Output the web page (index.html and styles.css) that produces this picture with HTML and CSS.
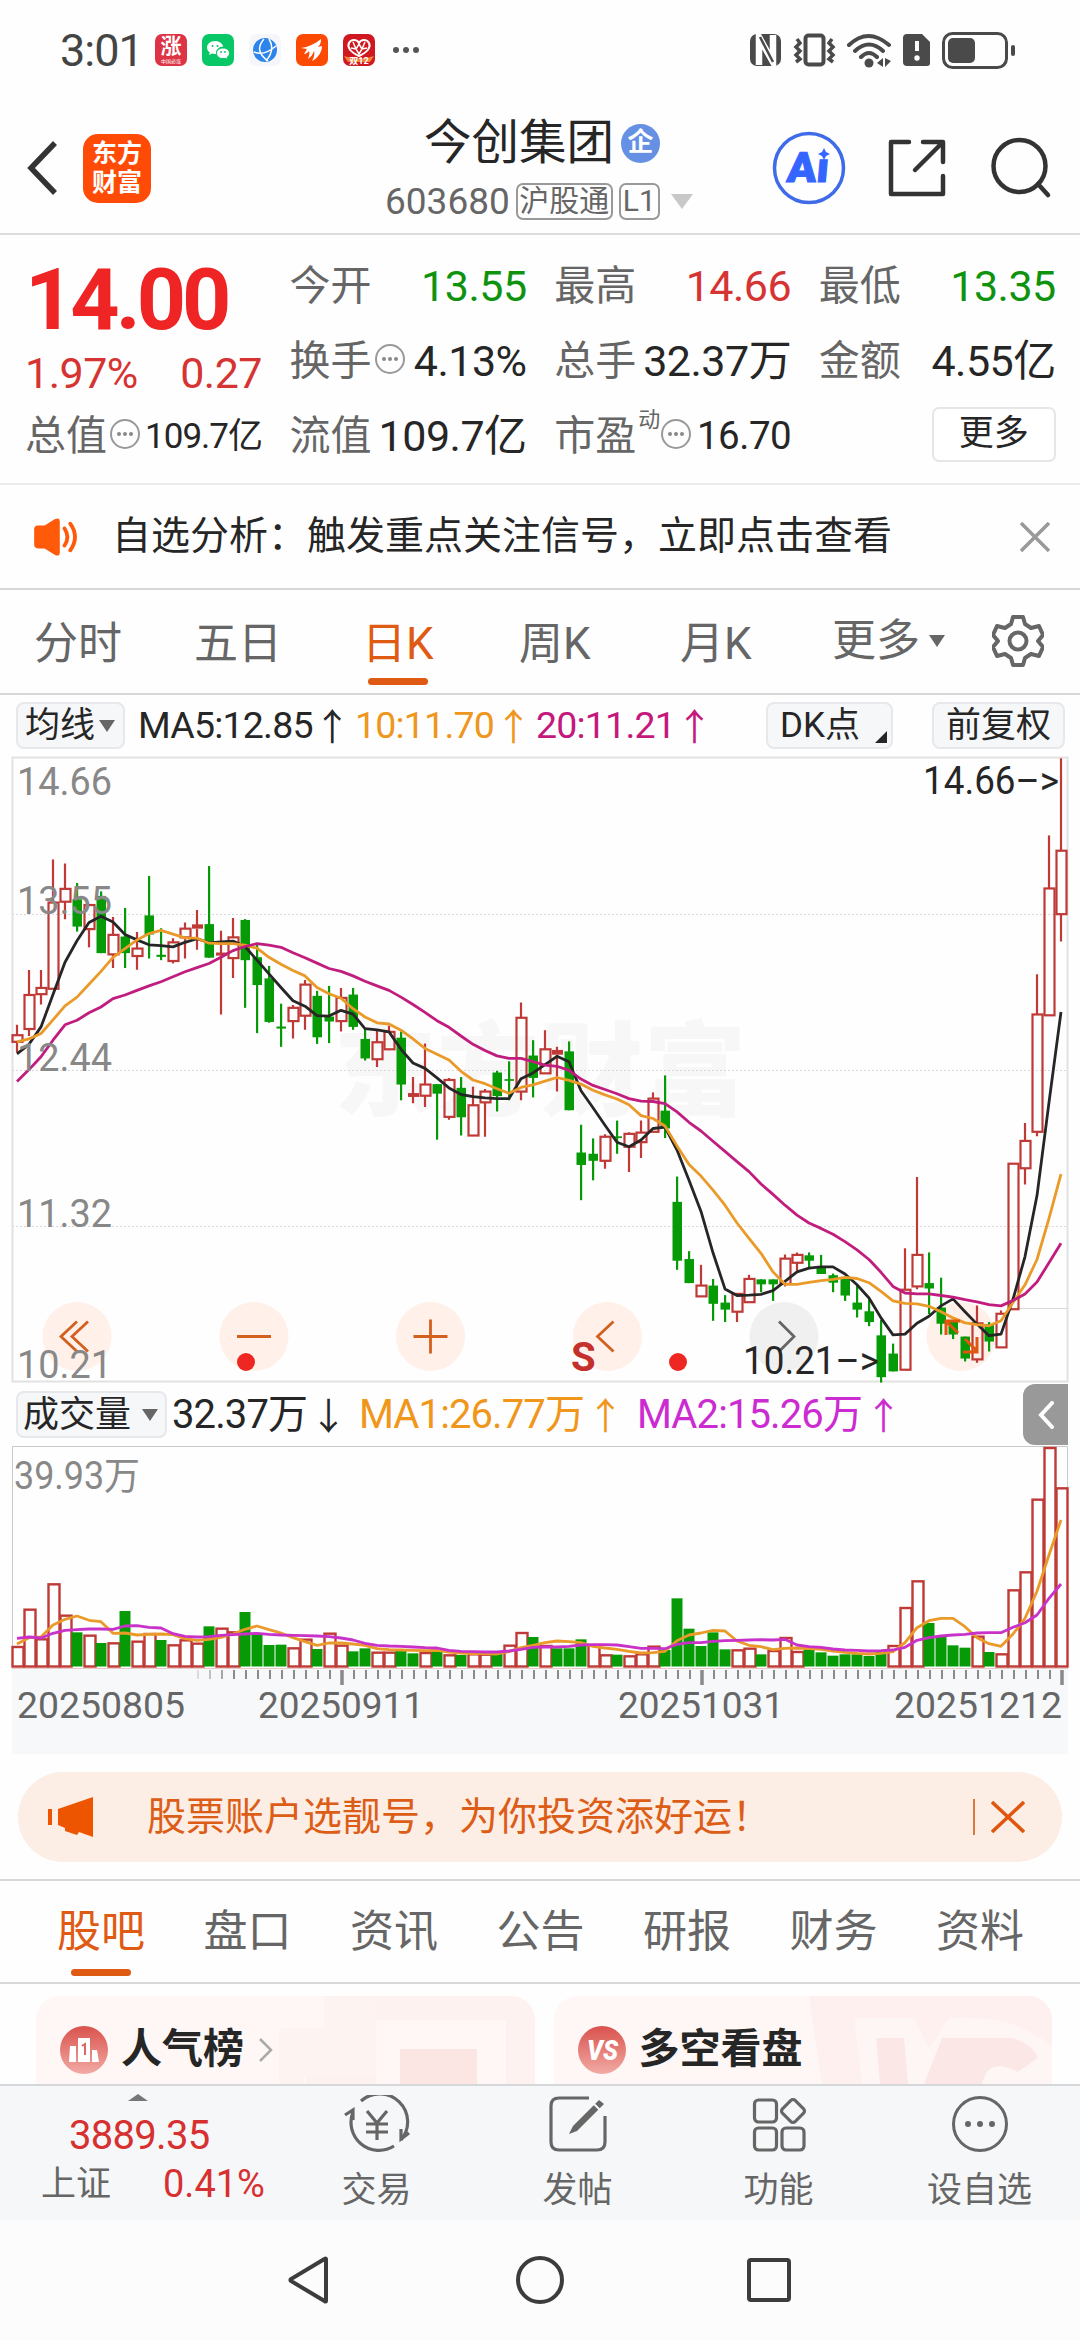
FILE: index.html
```html
<!DOCTYPE html>
<html lang="zh-CN">
<head>
  <meta charset="UTF-8">
  <meta name="viewport" content="width=device-width, initial-scale=1.0">
  <title>今创集团 603680</title>
  <link rel="stylesheet" href="styles.css">
</head>
<body>
  <!-- 状态栏 -->
  <div class="status">
    <span class="time">3:01</span>
    <div class="app-icons">
      <span class="app red"><b>涨</b><i>中国必涨</i></span>
      <span class="app wechat">
        <svg viewBox="0 0 32 32"><path d="M13 7c-4.700 0-8 3-8 6.600 0 2 1.100 3.800 2.800 5L7 21l3-1.500c1 .3 2 .4 3 .4h1c-.3-4 3-7.300 7.200-7.300C20.500 9.300 17 7 13 7z" fill="#fff"/><path d="M21 14c-3.700 0-6.500 2.300-6.500 5.300s2.800 5.300 6.500 5.300c.8 0 1.500-.1 2.200-.3l2.500 1.300-.6-2.200c1.500-1 2.400-2.400 2.400-4.100 0-3-2.800-5.300-6.500-5.300z" fill="#fff" stroke="#07c160"/><g fill="#07c160"><circle cx="10.500" cy="12" r="1"/><circle cx="15.500" cy="12" r="1"/><circle cx="19" cy="18" r=".9"/><circle cx="23" cy="18" r=".9"/></g></svg>
      </span>
      <span class="app globe">
        <svg viewBox="0 0 32 32"><circle cx="16" cy="16" r="12" fill="#2d84ea"/><path d="M15 5C9 12 8 19 19 27M20 5c5 8 3 15-3 22M5 18c7 3 15 0 22-6" fill="none" stroke="#fff" stroke-width="1.500"/></svg>
      </span>
      <span class="app orange">
        <svg viewBox="0 0 32 32"><path d="M5 14C12 13 19 10 25 5c0 4-1 6-3 8l4-1c0 6-4 12-10 15 2-4 3-7 2-10-1 3-3 6-6 8 1-3 2-6 1-8-1 1-3 3-5 3l3-5z" fill="#fff"/></svg>
      </span>
      <span class="app festival">
        <svg viewBox="0 0 32 32"><path d="M16 22C7 18 4 13 6 9c2-4 8-4 10 0 2-4 8-4 10 0 2 4-1 9-10 13z" fill="none" stroke="#fff" stroke-width="2"/><path d="M10 8l3 7-5-1M22 8l-3 7 5-1M16 10l3 5-3 5-3-5z" fill="none" stroke="#fff" stroke-width="1.500"/><path d="M1 22q15 5 30 0l-4 6H5z" fill="#f58238"/></svg>
        <b>双12</b>
      </span>
    </div>
    <div class="dots"><i></i><i></i><i></i></div>
    <svg class="sys" viewBox="0 0 270 40" fill="#4a4a4a">
      <rect x="0" y="4" width="31" height="32" rx="7"/>
      <path d="M9 35V7l14 25V5" fill="none" stroke="#fff" stroke-width="6.500"/>
      <path d="M10 7l13 25" fill="none" stroke="#4a4a4a" stroke-width="2.500"/>
      <rect x="55.500" y="5.500" width="18" height="29" rx="3" fill="none" stroke="#4a4a4a" stroke-width="4"/>
      <path d="M47 9l3 4-4 4 4 4-4 4 4 4-4 3M82 9l-3 4 4 4-4 4 4 4-4 4 4 3" fill="none" stroke="#4a4a4a" stroke-width="3.500"/>
      <g fill="none" stroke="#4a4a4a" stroke-width="4" stroke-linecap="round"><path d="M99 15q19-18 40 0M105 21q14-13 28 0M111 27q8-8 16 0"/></g>
      <circle cx="119" cy="33" r="4.500"/>
      <path d="M127 33l6-5v9zM135 28v9l6-6z"/>
      <path d="M157 4h15l8 8v21q0 3-3 3h-20q-4 0-4-4V8q0-4 4-4z"/>
      <path d="M167 11v10" stroke="#fff" stroke-width="4"/><circle cx="167" cy="28" r="2.700" fill="#fff"/>
      <rect x="193.500" y="3.500" width="63" height="34" rx="9" fill="none" stroke="#4a4a4a" stroke-width="3"/>
      <rect x="198" y="8" width="27" height="25" rx="5"/>
      <rect x="261" y="15" width="4" height="11" rx="2"/>
    </svg>
  </div>

  <!-- 标题栏 -->
  <header class="header">
    <svg class="back" viewBox="0 0 32 56"><path d="M29 3L5 28l24 25" fill="none" stroke="#333" stroke-width="5.500"/></svg>
    <div class="logo">东方<br>财富</div>
    <div class="title">
      <div class="name">今创集团<span class="badge">企</span></div>
      <div class="code">603680<span class="tag">沪股通</span><span class="tag l1">L1</span><i class="tri big"></i></div>
    </div>
    <svg class="ai" viewBox="0 0 74 74"><circle cx="37" cy="37" r="34.500" fill="none" stroke="#3f6be8" stroke-width="3.500"/><text transform="translate(14 51) skewX(-5)" font-size="42" font-weight="900" textLength="42" lengthAdjust="spacingAndGlyphs" fill="#3465ff" stroke="#3465ff">Aı</text><path d="M52 17l2 4 4 2-4 2-2 4-2-4-4-2 4-2z" fill="#3465ff"/></svg>
    <svg class="share" viewBox="0 0 58 58"><g fill="none" stroke="#333" stroke-width="4.500" stroke-linecap="round" stroke-linejoin="round"><path d="M21 3H3v52h52V37M35 3h20v20M54 4L27 31"/></g></svg>
    <svg class="search" viewBox="0 0 62 62"><g fill="none" stroke="#333" stroke-width="4.500" stroke-linecap="round"><circle cx="29.500" cy="29" r="26"/><path d="M48 47l10 11"/></g></svg>
  </header>

  <!-- 行情 -->
  <section class="quote">
    <div class="price">
      <div class="last">14.00</div>
      <div class="chg"><span>1.97%</span><span>0.27</span></div>
    </div>
    <div class="item"><label>今开</label><b class="green">13.55</b></div>
    <div class="item"><label>最高</label><b class="up">14.66</b></div>
    <div class="item"><label>最低</label><b class="green">13.35</b></div>
    <div class="item"><label>换手</label><i class="info"></i><b>4.13%</b></div>
    <div class="item"><label>总手</label><b>32.37万</b></div>
    <div class="item"><label>金额</label><b>4.55亿</b></div>
    <div class="item"><label>总值</label><i class="info"></i><b class="sm">109.7亿</b></div>
    <div class="item"><label>流值</label><b>109.7亿</b></div>
    <div class="item"><label>市盈</label><sup>动</sup><i class="info"></i><b class="mid">16.70</b></div>
    <div class="item"><button class="more">更多</button></div>
  </section>

  <div class="notice">
    <svg class="horn" viewBox="0 0 46 40"><path d="M4 8h7L22 1q5-2 5 3v32q0 5-5 3L11 32H4q-4 0-4-4V12q0-4 4-4z" fill="#ff5a0a"/><path d="M32 11q6 9 0 18M38 6q10 14 0 28" fill="none" stroke="#ff5a0a" stroke-width="4" stroke-linecap="round"/></svg>
    <p>自选分析：触发重点关注信号，立即点击查看</p>
    <svg class="close" viewBox="0 0 30 30"><path d="M1 1l28 28M29 1L1 29" stroke="#999" stroke-width="3.500"/></svg>
  </div>

  <!-- K线周期 -->
  <nav class="period">
    <a>分时</a><a>五日</a><a class="on">日K</a><a>周K</a><a>月K</a><a>更多<i class="tri dark"></i></a>
    <svg class="gear" viewBox="0 0 52 52"><path d="M21 2h10l2 7 6 4 8-2 4 9-5 6 5 6-4 9-8-2-6 4-2 7H21l-2-7-6-4-8 2-4-9 5-6-5-6 4-9 8 2 6-4z" fill="none" stroke="#666" stroke-width="4" stroke-linejoin="round"/><circle cx="26" cy="26" r="8.500" fill="none" stroke="#666" stroke-width="4"/></svg>
  </nav>

  <div class="ma-bar">
    <span class="btn">均线<i class="tri dark"></i></span>
    <span class="ma5">MA5:12.85<em>↑</em></span>
    <span class="ma10">10:11.70<em>↑</em></span>
    <span class="ma20">20:11.21<em>↑</em></span>
    <span class="btn dk">DK点<i class="corner"></i></span>
    <span class="btn fq">前复权</span>
  </div>

  <svg id="kline" class="kline" viewBox="0 0 1080 627"></svg>

  <div class="vol-bar">
    <span class="btn">成交量<i class="tri dark"></i></span>
    <span class="v0">32.37万<em>↓</em></span>
    <span class="v1">MA1:26.77万<em>↑</em></span>
    <span class="v2">MA2:15.26万<em>↑</em></span>
    <span class="handle"><svg viewBox="0 0 16 28"><path d="M14 2L3 14l11 12" fill="none" stroke="#fff" stroke-width="4" stroke-linecap="round"/></svg></span>
  </div>

  <svg id="volume" class="volume" viewBox="0 0 1080 308"></svg>

  <div class="banner">
    <svg class="speaker" viewBox="0 0 46 40"><path d="M0 12h4v16H0zM10 12L45 0v40L31 35l-2 3-12-4v-3l-7-3z" fill="#ee5500"/></svg>
    <p>股票账户选靓号，为你投资添好运！</p>
    <i class="sep"></i>
    <svg class="x" viewBox="0 0 34 32"><path d="M1 1l32 30M33 1L1 31" stroke="#e0560f" stroke-width="3.500"/></svg>
  </div>

  <nav class="tabs">
    <a class="on">股吧</a><a>盘口</a><a>资讯</a><a>公告</a><a>研报</a><a>财务</a><a>资料</a>
  </nav>

  <div class="cards">
    <div class="card">
      <svg class="bg" viewBox="0 0 499 88"><path d="M288 0h211v88H470V24H340v64H270V80h68V32H288z" fill="#fdf2f0"/><path d="M243 32h45V0h52v80h-72v8h-25z" fill="#fdf3f1"/><path d="M364 53h77v35h-77z" fill="#fbe6e4"/></svg>
      <svg class="ic" viewBox="0 0 48 48"><defs><linearGradient id="g" x1="0" y1="0" x2="0" y2="1"><stop offset="0" stop-color="#d9524d"/><stop offset="1" stop-color="#f2aaa4"/></linearGradient></defs><circle cx="24" cy="24" r="24" fill="url(#g)"/><path d="M10 20h6v16H9zM18 12h12v24H18zM32 24h5l2 12h-7z" fill="#fff"/><path d="M22 20l3-2v11" fill="none" stroke="#dd6661" stroke-width="2"/></svg>
      <b>人气榜</b>
      <svg class="arrow" viewBox="0 0 14 24"><path d="M1 1l11 11L1 23" fill="none" stroke="#aaa" stroke-width="2.500"/></svg>
    </div>
    <div class="card">
      <svg class="bg" viewBox="0 0 499 88"><path d="M255 0h244v88H268z" fill="#fdf0ee"/><path d="M300 22h60l15 30 20-30q70-4 104 30v36H308z" fill="#fef6f4"/><path d="M322 42h28l4 46h-28zM388 42h70q20 5 26 20l-20 14q-30-16-36 12H370z" fill="#fbe8e6"/></svg>
      <svg class="ic" viewBox="0 0 48 48"><circle cx="24" cy="24" r="24" fill="url(#g)"/><text x="9" y="34" font-size="28" font-weight="900" font-style="italic" textLength="31" lengthAdjust="spacingAndGlyphs" fill="#fff">VS</text></svg>
      <b>多空看盘</b>
    </div>
  </div>

  <footer class="bottom">
    <div class="index">
      <i class="tri-up"></i>
      <strong>3889.35</strong>
      <div><span>上证</span><em>0.41%</em></div>
    </div>
    <div class="act">
      <svg viewBox="0 0 66 58"><g fill="none" stroke="#666" stroke-width="3.200"><path d="M17 6a28 28 0 0 1 40 39M50 51A28 28 0 0 1 9 17M1 20l8-5v10M65 38l-8 6V34"/><path d="M23 16l10 12 10-12M33 28v17M22 29h22M22 37h22"/></g></svg>
      <span>交易</span>
    </div>
    <div class="act">
      <svg viewBox="0 0 66 58"><path d="M44 3H14q-8 0-8 8v36q0 8 8 8h38q8 0 8-8V21" fill="none" stroke="#666" stroke-width="3.200"/><path d="M54 5l5 4-27 27-8 3 4-8z" fill="#666"/><path d="M49 9l6 6" stroke="#f6f7f9" stroke-width="2"/></svg>
      <span>发帖</span>
    </div>
    <div class="act">
      <svg viewBox="0 0 66 58"><g fill="none" stroke="#666" stroke-width="3.200"><rect x="8.500" y="5" width="22" height="22" rx="4"/><rect x="8.500" y="33" width="22" height="22" rx="4"/><rect x="36" y="33" width="22" height="22" rx="4"/><rect x="38" y="7" width="18" height="18" rx="3" transform="rotate(45 47 16)"/></g></svg>
      <span>功能</span>
    </div>
    <div class="act">
      <svg viewBox="0 0 66 58"><circle cx="33" cy="29" r="26.500" fill="none" stroke="#666" stroke-width="3"/><g fill="#666"><circle cx="21" cy="29" r="3"/><circle cx="33" cy="29" r="3"/><circle cx="45" cy="29" r="3"/></g></svg>
      <span>设自选</span>
    </div>
  </footer>

  <div class="sysnav">
    <svg viewBox="0 0 44 48"><path d="M39 3v42q0 1-1.500 0L4 25q-1-1 0-2L37.500 3q1.500-1 1.500 0z" fill="none" stroke="#3c3c3c" stroke-width="4"/></svg>
    <svg viewBox="0 0 48 48"><circle cx="24" cy="24" r="22" fill="none" stroke="#3c3c3c" stroke-width="4"/></svg>
    <svg viewBox="0 0 44 44"><rect x="2" y="2" width="40" height="40" rx="2" fill="none" stroke="#3c3c3c" stroke-width="4"/></svg>
  </div>

  <script src="chart.js"></script>
</body>
</html>
```

FILE: styles.css
```css
* { box-sizing: border-box; }
body {
  margin: 0;
  width: 1080px;
  height: 2340px;
  overflow: hidden;
  background: #fefefe;
  color: #262626;
  font-family: Roboto, "Noto Sans CJK SC", sans-serif;
  display: flex;
  flex-direction: column;
  line-height: 1;
}
body > * { flex: none; }
i, em { font-style: normal; }
p { margin: 0; }
svg { display: block; flex: none; }
a, span, label, b { white-space: nowrap; }

.tri {
  width: 0;
  border: 8px solid transparent;
  border-bottom: 0;
  border-top: 12px solid #666;
}
.tri.big { border-width: 15px 11px 0; border-top-color: #c8c8c8; margin-left: 11px; }

/* 状态栏 */
.status { height: 100px; display: flex; align-items: center; padding: 0 60px 0 60px; }
.time { font-size: 45px; color: #444; width: 95px; letter-spacing: -1px; }
.app-icons { display: flex; gap: 15px; }
.app {
  width: 32px;
  height: 32px;
  border-radius: 7px;
  display: flex;
  flex-direction: column;
  align-items: center;
  position: relative;
  color: #fff;
  overflow: hidden;
}
.app svg { width: 32px; height: 32px; }
.app.red { background: #dc3345; }
.app.red b { font-size: 21px; margin-top: 2px; }
.app.red i { font-size: 5px; margin-top: 2px; }
.app.wechat { background: #07c766; }
.app.globe { background: #f4f6f9; }
.app.orange { background: #fc4a05; }
.app.festival { background: #cf1820; }
.app.festival b { position: absolute; bottom: 0; font-size: 9px; color: #fff; }
.dots { display: flex; gap: 4px; margin-left: 18px; }
.dots i { width: 6px; height: 6px; border-radius: 50%; background: #555; }
.sys { width: 270px; height: 40px; margin-left: auto; }

/* 标题栏 */
.header {
  height: 135px;
  display: flex;
  align-items: center;
  border-bottom: 2px solid #dcdcdc;
  padding: 3px 28px 0 26px;
}
.back { width: 32px; height: 56px; }
.logo {
  width: 68px;
  height: 69px;
  margin-left: 25px;
  border-radius: 15px;
  background: #ff4b05;
  color: #fff;
  font-size: 25px;
  font-weight: bold;
  line-height: 29px;
  padding-top: 5px;
  text-align: center;
}
.title { width: 318px; margin-left: 234px; height: 132px; }
.name { display: flex; align-items: center; margin-left: 39px; margin-top: 18px; font-size: 47.500px; }
.badge {
  width: 39px;
  height: 39px;
  border-radius: 50%;
  background: #6590e4;
  color: #fff;
  font-size: 26px;
  font-weight: bold;
  line-height: 37px;
  text-align: center;
  margin-left: 7px;
}
.code { display: flex; align-items: center; font-size: 37px; color: #666; margin-top: 15px; }
.tag {
  border: 2px solid #999;
  border-radius: 7px;
  height: 37px;
  width: 97px;
  font-size: 30px;
  line-height: 32px;
  text-align: center;
  margin-left: 6px;
}
.tag.l1 { width: 41px; }
.ai { width: 74px; height: 74px; margin-left: 69px; }
.share { width: 58px; height: 58px; margin-left: 42px; }
.search { width: 62px; height: 62px; margin-left: 44px; }

/* 行情 */
.quote {
  height: 250px;
  padding: 14px 24px 0 25px;
  display: grid;
  grid-template-columns: repeat(4, 237px);
  grid-auto-rows: 75px;
  column-gap: 27.600px;
  border-bottom: 2px solid #ececec;
}
.price { grid-row: span 2; color: #ee2524; }
.last { font-size: 86px; font-weight: bold; margin-top: 8px; letter-spacing: -4px; height: 86px; }
.chg { display: flex; justify-content: space-between; font-size: 43px; color: #d63333; margin-top: 9px; letter-spacing: -.5px; }
.item { display: flex; align-items: center; }
.item label { font-size: 41px; color: #666; }
.item b { margin-left: auto; font-weight: normal; font-size: 43px; letter-spacing: -.5px; }
.item b.sm { font-size: 35px; letter-spacing: -1px; }
.item b.mid { font-size: 38.500px; }
.item sup { font-size: 22px; color: #666; align-self: flex-start; margin: 10px 0 0 2px; }
.item .green { color: #0f930f; }
.item .up { color: #d63333; }
.info {
  width: 30px;
  height: 30px;
  margin-left: 3px;
  border: 2.500px solid #999;
  border-radius: 50%;
  display: flex;
  align-items: center;
  justify-content: center;
  margin-top: -6px;
}
.info::before { content: ""; width: 4px; height: 4px; border-radius: 50%; background: #888; box-shadow: -6px 0 #888, 6px 0 #888; }
.item sup + .info { margin-left: 1px; }
.more {
  margin: -5px 0 0 auto;
  width: 124px;
  height: 55px;
  padding: 0;
  border: 2px solid #e5e6e8;
  border-radius: 7px;
  background: #fff;
  color: #262626;
  font: 35px/48px Roboto, "Noto Sans CJK SC", sans-serif;
}

.notice { height: 105px; display: flex; align-items: center; padding: 0 30px 0 33px; border-bottom: 2px solid #d8d8d8; }
.horn { width: 46px; height: 38px; }
.notice p { font-size: 39px; margin-left: 33px; }
.close { width: 30px; height: 30px; margin-left: auto; }

/* K线周期 */
.period { height: 105px; display: flex; align-items: center; border-bottom: 2px solid #d8d8d8; padding-left: 34px; font-size: 44px; color: #666; }
.period a { width: 160px; height: 100%; padding-top: 32px; }
.period a:nth-child(3) { width: 157px; margin-left: 8px; }
.period a:nth-child(4) { width: 161px; }
.period a:nth-child(5) { width: 152px; }
.period a:nth-child(6) { width: 158px; display: flex; align-items: center; padding-top: 0; margin-bottom: 1px; }
.period .tri { margin-left: 9px; }
.on { color: #df5a12; }
.period .on::after, .tabs .on::after { content: ""; display: block; width: 60px; height: 7px; border-radius: 4px; background: #df5a12; }
.period .on::after { margin: 12px 0 0 6px; }
.gear { width: 52px; height: 52px; margin-left: 2px; margin-top: -2px; }

.ma-bar, .vol-bar { display: flex; align-items: center; padding-left: 16px; position: relative; }
.ma-bar { height: 61px; font-size: 37.500px; letter-spacing: -.8px; }
.ma-bar > span, .vol-bar > span { display: flex; align-items: center; flex: none; }
em { font-family: "Noto Sans CJK SC", sans-serif; letter-spacing: 0; }
.ma-bar em { margin-left: 1px; font-size: 37px; }
.btn {
  height: 47px;
  border: 2px solid #e6e8ec;
  border-radius: 8px;
  background: #f6f7f9;
  font-size: 35px;
  padding-left: 7px;
  letter-spacing: 0;
}
.ma-bar .btn { width: 109px; }
.btn .tri { margin-left: 4px; }
.ma5 { width: 217px; margin-left: 13px; }
.ma10 { width: 181px; color: #ee961d; }
.ma20 { width: 220px; color: #c4187c; }
.ma-bar .dk { width: 127px; margin-left: 10px; padding-left: 12px; position: relative; }
.corner { position: absolute; right: 4px; bottom: 4px; border-left: 12px solid transparent; border-bottom: 12px solid #262626; }
.ma-bar .fq { width: 133px; margin-left: 39px; padding-left: 12px; }

.kline { width: 1080px; height: 627px; overflow: visible; }

.vol-bar { height: 63px; font-size: 40px; letter-spacing: -.9px; }
.vol-bar .btn { width: 151px; font-size: 36px; padding-left: 5px; }
.vol-bar .tri { margin-left: 11px; }
.vol-bar em { margin-left: 3px; font-size: 37px; }
.v0 { margin-left: 5px; width: 187px; }
.v1 { width: 278px; color: #f0971b; }
.v2 { color: #cb2bd0; }
.vol-bar .handle { margin-left: auto; margin-right: 12px; width: 45px; height: 61px; border-radius: 12px 0 0 12px; background: #999; justify-content: center; }
.handle svg { width: 16px; height: 28px; }
.volume { width: 1080px; height: 308px; }

.banner {
  height: 90px;
  margin: 18px 18px 17px;
  border-radius: 45px;
  background: #fcede5;
  color: #dc5d16;
  display: flex;
  align-items: center;
  padding: 0 37px 0 30px;
}
.speaker { width: 46px; height: 40px; }
.banner p { font-size: 39px; margin-left: 53px; }
.sep { width: 2px; height: 36px; background: #d9793f; margin-left: auto; }
.x { width: 34px; height: 32px; margin-left: 16px; }

.tabs { height: 105px; border-top: 2px solid #d8d8d8; border-bottom: 2px solid #d8d8d8; display: flex; gap: 58.500px; padding: 29px 0 0 57px; font-size: 44px; color: #666; }
.tabs .on { color: #df5a12; }
.tabs .on::after { margin: 15px 0 0 14px; }

.cards { height: 100px; display: flex; gap: 19px; padding: 12px 28px 0 36px; overflow: hidden; }
.card {
  width: 499px;
  height: 120px;
  border-radius: 24px;
  background: #fef7f5;
  position: relative;
  overflow: hidden;
  display: flex;
  padding: 30px 24px 0;
}
.card .bg { position: absolute; left: 0; top: 0; width: 499px; height: 88px; }
.card .ic { width: 48px; height: 48px; position: relative; }
.card b { font-size: 41px; font-weight: 600; position: relative; margin: 3px 0 0 13px; }
.arrow { width: 14px; height: 24px; position: relative; margin: 12px 0 0 15px; }

.bottom { height: 136px; background: #f6f7f9; border-top: 2px solid #d5d7db; display: flex; }
.index { width: 300px; padding-left: 41px; color: #d63030; }
.tri-up { display: block; width: 0; margin: 8px 0 0 87px; border: 10px solid transparent; border-top: 0; border-bottom: 7px solid #777; }
.index strong { display: block; font-weight: normal; font-size: 40px; margin: 15px 0 0 28px; letter-spacing: -.7px; }
.index div { display: flex; align-items: center; font-size: 35px; margin-top: 9px; }
.index span { color: #666; }
.index em { margin: 0 0 0 52px; width: auto; font: 38px/38px Roboto, sans-serif; letter-spacing: 0; }
.act { width: 201px; display: flex; flex-direction: column; align-items: center; font-size: 35px; color: #666; padding-top: 9px; }
.index + .act { margin-left: -24px; }
.act svg { width: 66px; height: 58px; margin-bottom: 20px; }

.sysnav { height: 120px; background: #fcfcfc; display: flex; align-items: center; }
.sysnav svg:nth-child(1) { width: 44px; height: 48px; margin-left: 287px; }
.sysnav svg:nth-child(2) { width: 48px; height: 48px; margin-left: 185px; }
.sysnav svg:nth-child(3) { width: 44px; height: 44px; margin-left: 183px; }
```

FILE: chart.js
```js
const STEP = 12, X0 = 17;
const RED = '#bf3a36', GREEN = '#069b06';

// 最高, 实体上沿, 实体下沿, 最低, 涨跌
const candles = `663 688 704 730 r,531 591 673 690 r,531 574 589 614 r,264 368 576 576 r,274 335 366 408 r,321 360 426 438 g,
374 374 432 476 r,341 352 490 490 g,403 446 493 526 r,381 450 490 526 g,439 479 497 530 r,304 399 445 503 g,430 494 499 507 g,
454 464 509 515 r,416 431 452 503 r,386 423 431 482 r,280 420 501 501 g,436 491 496 638 r,405 452 502 550 r,408 410 507 622 g,
466 500 567 683 g,521 551 656 658 g,612 667 672 716 g,615 622 654 696 r,555 566 641 675 r,581 593 693 709 g,569 643 655 707 g,
574 598 654 679 r,574 590 668 675 g,672 697 744 749 g,676 705 746 765 r,665 680 722 722 r,679 694 807 845 g,789 830 837 852 r,
708 807 834 861 r,806 806 829 940 g,791 796 885 892 r,789 815 886 930 g,812 857 930 930 r,818 824 850 933 r,774 778 835 872 g,
751 794 798 845 g,609 646 824 845 r,700 737 791 838 g,676 722 780 780 r,716 726 735 824 r,703 727 869 869 g,904 971 1001 1086 g,
937 974 991 1038 g,927 933 991 1010 r,894 932 936 974 g,922 926 957 1018 r,894 923 946 984 r,826 841 921 921 r,785 870 913 936 g,
1029 1090 1232 1254 g,1209 1228 1286 1286 g,1242 1292 1318 1318 r,1276 1292 1336 1377 g,1315 1333 1350 1380 g,1312 1312 1355 1380 r,
1266 1276 1332 1332 r,1277 1277 1289 1308 g,1277 1277 1289 1329 g,1217 1227 1288 1294 r,1212 1218 1237 1256 r,1212 1219 1232 1250 g,
1218 1245 1264 1264 g,1263 1267 1285 1308 g,1275 1275 1316 1329 g,1290 1333 1350 1369 g,1325 1354 1380 1390 g,1375 1412 1513 1526 g,
1432 1456 1499 1499 g,1202 1302 1495 1495 r,1030 1218 1294 1301 r,1212 1286 1299 1361 g,1273 1345 1384 1410 g,1375 1375 1410 1421 g,
1415 1415 1468 1475 g,1340 1383 1470 1478 r,1380 1385 1427 1451 g,1352 1360 1441 1441 r,998 998 1349 1349 r,900 943 1009 1048 r,
541 638 921 932 r,206 334 640 640 r,20 243 396 462 r`.split(',').map(s => s.trim().split(' '));

const ma5 = [733,710,668,590,512,460,416,401,415,445,458,470,472,475,464,455,465,463,461,474,507,540,573,605,618,641,642,628,637,
672,675,680,722,755,768,791,815,831,836,839,841,841,793,779,759,739,752,822,863,905,946,957,941,913,910,965,1038,1113,1213,
1300,1316,1315,1313,1304,1282,1259,1250,1247,1247,1264,1290,1322,1370,1411,1409,1383,1366,1341,1324,1355,1385,1413,1409,1325,1222,1075,850,632];
const ma10 = [704,697,684,651,617,596,565,534,500,479,458,443,435,444,453,454,466,467,467,471,478,500,517,532,545,573,588,599,624,
644,658,661,676,697,720,734,748,775,796,805,817,828,814,808,799,790,797,806,821,832,842,856,882,889,907,955,1000,1028,1062,
1098,1141,1178,1214,1259,1289,1289,1284,1280,1277,1272,1275,1285,1306,1329,1335,1336,1342,1355,1370,1382,1386,1389,1377,1333,1290,1229,1130,1023];
const ma20 = [800,771,740,700,663,652,634,620,600,591,580,569,559,547,535,525,515,500,484,474,467,471,476,489,501,514,527,534,545,
558,569,580,596,614,633,653,669,690,710,725,738,744,744,752,760,763,773,794,809,819,829,841,847,848,853,873,898,919,944,
968,993,1017,1047,1072,1098,1122,1141,1154,1168,1186,1206,1229,1260,1294,1310,1312,1312,1316,1320,1326,1331,1338,1341,1328,1312,1283,1237,1190];

const vols = [828,716,805,640,734,787,794,819,817,723,812,789,810,823,808,818,769,773,784,726,790,825,824,832,806,837,788,824,844,835,
845,845,840,850,846,840,853,855,850,851,850,824,786,801,825,835,835,808,824,853,854,856,850,827,840,685,776,828,787,838,838,833,853,
840,801,843,838,847,857,853,853,858,840,825,711,631,759,801,826,833,797,846,850,658,604,386,231,352];
const volDir = 'rrrrrgrgrgrrgrrrgrrgggg' + 'rrgrrggrrggrgrgrrgrrgrgggrrgrrr' + 'ggggggrrgrrrggggggg' + 'rrrggggrgrrrrrr';
const vma1 = [822,803,801,765,748,738,751,755,790,789,795,793,792,794,806,811,808,802,792,778,768,779,789,803,815,826,819,819,822,826,
836,839,840,841,842,841,846,849,851,851,852,845,833,826,818,813,815,818,829,834,838,844,849,848,844,812,795,789,781,783,813,826,830,
839,835,834,836,838,843,847,850,852,850,845,818,773,752,745,745,770,803,821,829,792,745,664,555,450];
const vma2 = [805,801,804,790,781,779,777,777,778,768,767,772,774,791,799,801,800,796,794,792,790,793,795,796,797,798,800,804,810,820,
826,828,829,831,833,834,841,844,845,846,846,843,838,832,831,831,829,825,824,824,825,830,835,835,836,823,818,818,814,812,811,810,809,
810,808,825,830,832,837,840,841,843,842,840,832,811,803,798,795,793,789,788,788,772,758,735,685,642];

const x = i => X0 + i * STEP;
const ky = v => v * 0.41454 - 6;
const vy = v => v / 3 - 76;

function line(arr, y, color, w) {
  const pts = arr.map((v, i) => x(i) + ',' + y(v).toFixed(1)).join(' ');
  return `<polyline points="${pts}" fill="none" stroke="${color}" stroke-width="${w}" stroke-linejoin="round"/>`;
}

function text(str, px, py, w, color, size) {
  return `<text x="${px}" y="${py}" textLength="${w}" lengthAdjust="spacingAndGlyphs" fill="${color}" font-size="${size || 39}">${str}</text>`;
}

function circle(cx, fill, icon, stroke) {
  return `<circle cx="${cx}" cy="580.500" r="34.500" fill="${fill}"/>
    <path transform="translate(${cx} 580.500)" d="${icon}" fill="none" stroke="${stroke}" stroke-width="2.800"/>`;
}

function drawKline() {
  let s = '<text x="334" y="352" font-size="102" font-weight="900" textLength="412" fill="#f7f7f7">东方财富</text>';
  s += '<rect x="12.500" y="1.500" width="1055" height="624" fill="none" stroke="#e2e2e2" stroke-width="2"/>';
  [158.5, 314.5, 470.5].forEach(y => {
    s += `<path d="M12 ${y}H1067" stroke="#d8d8d8" stroke-dasharray="2 2"/>`;
  });
  s += '<path d="M1018 552.500H1067" stroke="#d8d8d8"/>';
  const pale = 'rgba(255,230,218,.6)', o = '#d2601f';
  s += circle(77, pale, 'M0-15L-16 0L0 15M11-15L-5 0L11 15', o);
  s += circle(254, pale, 'M-17 0H17', o);
  s += circle(430.5, pale, 'M-17 0H17M0-17V17', o);
  s += circle(607.5, pale, 'M6-15L-10 0L6 15', o);
  s += circle(784, 'rgba(230,230,230,.6)', 'M-5-15L10 0L-5 15', '#666');
  s += circle(961, pale, '', o);

  candles.forEach(([h, a, b, l, dir], i) => {
    const cx = x(i);
    const [hy, ay, by, ly] = [h, a, b, l].map(v => ky(+v));
    const bh = by - ay;
    if (dir === 'g') {
      s += `<rect x="${cx - 1}" y="${hy}" width="2.200" height="${ly - hy}" fill="${GREEN}"/>`;
      s += `<rect x="${cx - 4.5}" y="${ay}" width="9.500" height="${Math.max(bh, 1.5)}" fill="${GREEN}"/>`;
    } else {
      s += `<path d="M${cx} ${hy}V${ay}M${cx} ${by}V${ly}" stroke="${RED}" stroke-width="2.200"/>`;
      s += bh < 4
        ? `<rect x="${cx - 5}" y="${ay - 1}" width="11" height="${bh + 1}" fill="${RED}"/>`
        : `<rect x="${cx - 4.5}" y="${ay}" width="10" height="${bh}" fill="none" stroke="${RED}" stroke-width="2.200"/>`;
    }
  });
  s += line(ma5, ky, '#262626', 2.8) + line(ma10, ky, '#ea9a28', 2.8) + line(ma20, ky, '#c01d7e', 2.8);
  s += '<path d="M958 577L946 565M946 579V565H960M965 583L977 595M977 581V596H963" fill="none" stroke="#e0560f" stroke-width="3"/>';

  [['14.66', 39], ['13.55', 157.5], ['12.44', 314.5], ['11.32', 470.5], ['10.21', 622]].forEach(([t, y]) => {
    s += text(t, 17, y, 95, '#888');
  });
  s += text('14.66–>', 923, 38, 136, '#262626');
  s += text('10.21–>', 743, 618, 136, '#262626');
  s += '<text x="571" y="615" font-size="40" font-weight="bold" fill="#c4302b">S</text>';
  s += '<circle cx="246" cy="606" r="9" fill="#ee2722"/><circle cx="678" cy="606" r="9" fill="#ee2722"/>';
  document.getElementById('kline').innerHTML = s;
}

function drawVolume() {
  const base = 221.5;
  let s = '<rect x="12" y="222" width="1056" height="86" fill="#f7f8fa"/>';
  s += '<path d="M12.500 222V.5H1067.500V222" fill="none" stroke="#c9c9c9"/>';
  vols.forEach((v, i) => {
    const y = vy(v), cx = x(i);
    s += volDir[i] === 'g'
      ? `<rect x="${cx - 5.5}" y="${y}" width="11" height="${base - y - 1}" fill="${GREEN}"/>`
      : `<rect x="${cx - 4.5}" y="${y + 1}" width="11" height="${base - y - 2}" fill="#fefefe" stroke="${RED}" stroke-width="2.400"/>`;
  });
  s += '<path d="M12 222.500H1068" stroke="#e9c9c6"/>';
  s += line(vma1, vy, '#ea9a28', 2.8) + line(vma2, vy, '#c832c8', 2.8);
  for (let i = 15; i < 88; i++) {
    const tall = i === 27 || i === 57 || i === 87;
    const o = Math.min(1, (i - 14) / 4);
    s += `<path d="M${x(i) + 1} 224V${tall ? 239 : 233}" stroke="#8a8a8a" stroke-width="${tall ? 3.5 : 2}" opacity="${o}"/>`;
  }
  s += text('39.93万', 14, 43, 126, '#888', 38);
  s += text('20250805', 17, 272, 168, '#666', 37);
  s += text('20250911', 258, 272, 166, '#666', 37);
  s += text('20251031', 618, 272, 166, '#666', 37);
  s += text('20251212', 894, 272, 168, '#666', 37);
  document.getElementById('volume').innerHTML = s;
}

drawKline();
drawVolume();
```
